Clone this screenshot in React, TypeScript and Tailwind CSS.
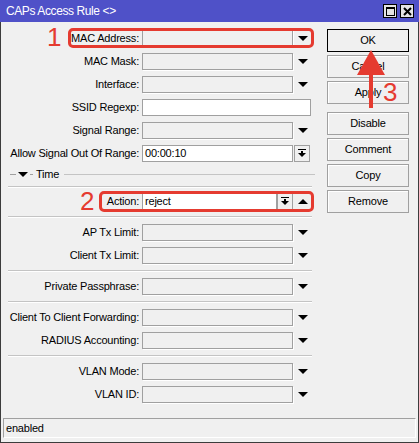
import React from "react";

type Kind = "drop" | "text" | "time" | "action";

function DownTri() {
  return (
    <svg width="10" height="5" viewBox="0 0 10 5">
      <polygon points="0,0 10,0 5,5" fill="#000" />
    </svg>
  );
}

function UpTri() {
  return (
    <svg width="10" height="5" viewBox="0 0 10 5">
      <polygon points="0,5 10,5 5,0" fill="#000" />
    </svg>
  );
}

// small "remove" button with bar + down arrow
function RemoveBtn() {
  return (
    <div className="flex h-[17px] w-[16px] items-center justify-center border border-[#a0a0a0] bg-[#f0f0f0]">
      <svg width="8" height="9" viewBox="0 0 8 9">
        <rect x="0" y="0" width="8" height="1" fill="#000" />
        <rect x="3" y="2" width="2" height="3" fill="#000" />
        <polygon points="0,4 8,4 4,8" fill="#000" />
      </svg>
    </div>
  );
}

function Field({ label, kind, value }: { label: string; kind: Kind; value?: string }) {
  return (
    <div className="flex h-[23px] items-center">
      <span className="w-[138px] text-right">{label}</span>
      {kind === "drop" && (
        <>
          <div className="ml-[3px] h-[17px] w-[151px] border border-[#a0a0a0] bg-[#f0f0f0] shadow-[1px_1px_0_#fff]" />
          <div className="flex w-[20px] justify-center">
            <DownTri />
          </div>
        </>
      )}
      {kind === "text" && (
        <div className="ml-[3px] h-[17px] w-[169px] border border-[#a0a0a0] bg-white" />
      )}
      {kind === "time" && (
        <>
          <div className="ml-[3px] h-[17px] w-[151px] border border-[#a0a0a0] bg-white pl-[2px] leading-[15px]">
            {value}
          </div>
          <div className="ml-[1px]">
            <RemoveBtn />
          </div>
        </>
      )}
      {kind === "action" && (
        <>
          <div className="ml-[3px] h-[17px] w-[135px] border border-[#a0a0a0] bg-white pl-[2px] leading-[15px]">
            {value}
          </div>
          <RemoveBtn />
          <div className="flex w-[19px] justify-center">
            <UpTri />
          </div>
        </>
      )}
    </div>
  );
}

function Sep({ h = 8 }: { h?: number }) {
  return (
    <div className={h === 8 ? "flex h-[8px] items-center" : "flex h-[6px] items-center"}>
      <div className="ml-[7px] h-[2px] w-[304px] border-t border-b border-t-[#c4c4c4] border-b-white" />
    </div>
  );
}

function Btn({ children, primary }: { children: React.ReactNode; primary?: boolean }) {
  return (
    <div
      className={
        primary
          ? "flex h-[23px] items-center justify-center border border-black bg-[#f0f0f0]"
          : "flex h-[23px] items-center justify-center border border-[#a0a0a0] bg-[#f0f0f0] shadow-[inset_1px_1px_0_#fff]"
      }
    >
      {children}
    </div>
  );
}

export default function App() {
  return (
    <div className="relative flex h-[443px] w-[419px] flex-col border-x border-b border-[#3c3c3c] bg-[#f0f0f0] font-['Liberation_Sans',Arial,sans-serif] text-[11px] tracking-[-0.2px] text-black">
      {/* title bar */}
      <div className="-mx-px flex h-[22px] items-center bg-[#4f51c8] pl-[6px] pr-[5px]">
        <span className="flex-1 text-[12px] tracking-[-0.4px] text-white">CAPs Access Rule &lt;&gt;</span>
        <div className="flex h-[14px] w-[14px] items-center justify-center border border-black bg-[#e4e4e4]">
          <div className="h-[9px] w-[9px] border border-t-2 border-black" />
        </div>
        <div className="ml-[3px] flex h-[14px] w-[14px] items-center justify-center border border-black bg-[#e4e4e4]">
          <svg width="9" height="9" viewBox="0 0 9 9">
            <path d="M1 1 L8 8 M8 1 L1 8" stroke="#000" strokeWidth="2" />
          </svg>
        </div>
      </div>

      {/* body */}
      <div className="flex flex-1 pt-[5px]">
        <div className="w-[326px]">
          <Field label="MAC Address:" kind="drop" />
          <Field label="MAC Mask:" kind="drop" />
          <Field label="Interface:" kind="drop" />
          <Field label="SSID Regexp:" kind="text" />
          <Field label="Signal Range:" kind="drop" />
          <Field label="Allow Signal Out Of Range:" kind="time" value="00:00:10" />
          <div className="flex h-[19px] items-center pl-[9px]">
            <div className="h-px w-[6px] bg-[#a0a0a0]" />
            <div className="ml-[2px]">
              <DownTri />
            </div>
            <div className="ml-[2px] h-px w-[3px] bg-[#a0a0a0]" />
            <span className="ml-[3px]">Time</span>
            <div className="ml-[5px] h-px w-[251px] bg-[#c4c4c4]" />
          </div>
          <Sep h={6} />
          <Field label="Action:" kind="action" value="reject" />
          <Sep />
          <Field label="AP Tx Limit:" kind="drop" />
          <Field label="Client Tx Limit:" kind="drop" />
          <Sep />
          <Field label="Private Passphrase:" kind="drop" />
          <Sep />
          <Field label="Client To Client Forwarding:" kind="drop" />
          <Field label="RADIUS Accounting:" kind="drop" />
          <Sep />
          <Field label="VLAN Mode:" kind="drop" />
          <Field label="VLAN ID:" kind="drop" />
        </div>

        <div className="mt-[2px] flex w-[82px] flex-col gap-[3px]">
          <Btn primary>OK</Btn>
          <Btn>Cancel</Btn>
          <Btn>Apply</Btn>
          <div className="mt-[5px] flex flex-col gap-[3px]">
            <Btn>Disable</Btn>
            <Btn>Comment</Btn>
            <Btn>Copy</Btn>
            <Btn>Remove</Btn>
          </div>
        </div>
      </div>

      {/* status bar */}
      <div className="mx-[2px] mb-[4px] h-[20px] border border-t-[#a0a0a0] border-l-[#a0a0a0] border-r-white border-b-white pl-[2px] leading-[18px]">
        enabled
      </div>

      {/* red annotations */}
      <div className="absolute left-[67px] top-[28px] h-[20px] w-[246px] rounded-[5px] border-[3px] border-[#e53b30]" />
      <div className="absolute left-[98px] top-[191px] h-[21px] w-[215px] rounded-[5px] border-[3px] border-[#e53b30]" />
      <span className="absolute left-[46px] top-[24px] text-[26px] leading-none tracking-normal text-[#e53b30]">1</span>
      <span className="absolute left-[79px] top-[188px] text-[26px] leading-none tracking-normal text-[#e53b30]">2</span>
      <span className="absolute left-[382px] top-[79px] text-[26px] leading-none tracking-normal text-[#e53b30]">3</span>
      <svg className="absolute left-[350px] top-[45px]" width="40" height="65" viewBox="0 0 40 65">
        <polygon points="20,5 6,30 34,30" fill="#e53b30" />
        <rect x="18" y="28" width="4" height="35" fill="#e53b30" />
      </svg>
    </div>
  );
}
